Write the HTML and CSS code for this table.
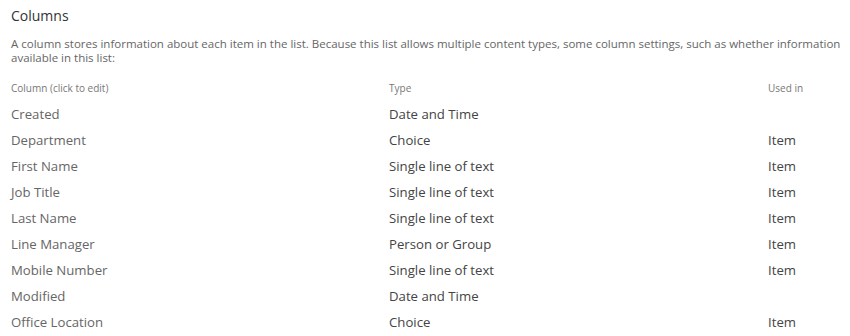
FILE: index.html
```html
<!DOCTYPE html>
<html>
<head>
<meta charset="utf-8">
<link rel="stylesheet" href="styles.css">
</head>
<body>
<div class="page">
  <h2 class="title">Columns</h2>
  <p class="desc"><span class="line">A column stores information about each item in the list. Because this list allows multiple content types, some column settings, such as whether information</span><span class="line">available in this list:</span></p>
  <div class="table">
    <div class="row head">
      <div class="c1">Column (click to edit)</div>
      <div class="c2">Type</div>
      <div class="c3">Used in</div>
    </div>
    <div class="row"><div class="c1">Created</div><div class="c2">Date and Time</div><div class="c3"></div></div>
    <div class="row"><div class="c1">Department</div><div class="c2">Choice</div><div class="c3">Item</div></div>
    <div class="row"><div class="c1">First Name</div><div class="c2">Single line of text</div><div class="c3">Item</div></div>
    <div class="row"><div class="c1">Job Title</div><div class="c2">Single line of text</div><div class="c3">Item</div></div>
    <div class="row"><div class="c1">Last Name</div><div class="c2">Single line of text</div><div class="c3">Item</div></div>
    <div class="row"><div class="c1">Line Manager</div><div class="c2">Person or Group</div><div class="c3">Item</div></div>
    <div class="row"><div class="c1">Mobile Number</div><div class="c2">Single line of text</div><div class="c3">Item</div></div>
    <div class="row"><div class="c1">Modified</div><div class="c2">Date and Time</div><div class="c3"></div></div>
    <div class="row"><div class="c1">Office Location</div><div class="c2">Choice</div><div class="c3">Item</div></div>
  </div>
</div>
</body>
</html>
```
FILE: styles.css
```css
html, body {
  margin: 0;
  padding: 0;
  background: #ffffff;
  overflow: hidden;
}
.page {
  padding: 6px 0 0 11px;
  font-family: "Open Sans", "Noto Sans", sans-serif;
  color: #444;
}
.title {
  margin: 0;
  font-size: 14px;
  font-weight: 400;
  line-height: 20px;
  color: #333;
}
.desc {
  margin: 11px 0 0 0;
  font-size: 11.5px;
  line-height: 14px;
  color: #666;
}
.desc .line {
  display: block;
  white-space: nowrap;
}
.table {
  margin-top: 11px;
  display: flex;
  flex-direction: column;
}
.row {
  display: grid;
  grid-template-columns: 378px 379px auto;
  height: 26px;
  align-items: center;
  font-size: 13.2px;
}
.row .c1 { color: #666; }
.row .c2 { color: #444; }
.row .c3 { color: #444; }
.row.head {
  height: 25px;
  font-size: 10px;
  padding-bottom: 1px;
  box-sizing: border-box;
}
.row.head .c1, .row.head .c2, .row.head .c3 { color: #777; }
```
